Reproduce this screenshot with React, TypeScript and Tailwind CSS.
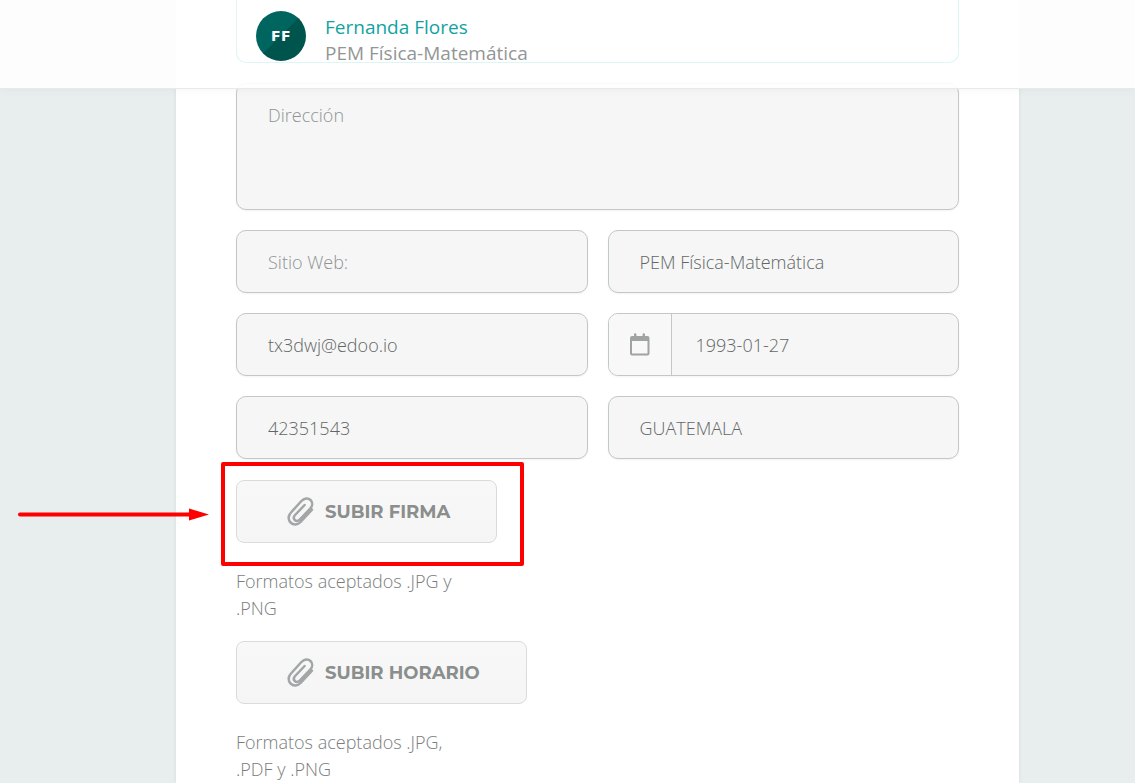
import React from "react";

const fieldBox = "rounded-[10px] border border-[#c1c8c7] bg-[#f6f6f6] shadow-[0_1px_2px_rgba(0,0,0,0.05)]";
const fieldText = "text-lg font-light text-[#626665] placeholder:text-[#8f9493] outline-none";
const noteText = "mt-[25px] w-[240px] text-lg leading-[27px] font-light text-[#797d7c]";

function Field({ label, value, placeholder, type = "text" }: { label: string; value?: string; placeholder?: string; type?: string }) {
  return (
    <input
      type={type}
      aria-label={label}
      defaultValue={value}
      placeholder={placeholder}
      className={`h-[63px] w-full min-w-0 px-[31px] ${fieldBox} ${fieldText}`}
    />
  );
}

function Paperclip() {
  return (
    <svg width="27" height="32" viewBox="0 0 27 32" fill="none" stroke="#a3a6a6" strokeWidth="2.5" strokeLinecap="round" strokeLinejoin="round" aria-hidden="true">
      <path d="M25 13.600 L13.6 26 C10.6 29.100 6.200 29.100 3.600 26.5 C0.9 23.8 1 19.600 4 16.5 L14.4 5 C17.2 2 21 1.600 23.500 4 C26 6.500 25.700 10 23.2 12.6 L13 23.400 C11.2 25.200 9.2 25.400 7.8 24 C6.4 22.600 6.600 20.600 8.1 19 L17.6 9" />
    </svg>
  );
}

function CalendarIcon() {
  return (
    <svg width="22" height="24" viewBox="0 0 22 24" fill="none" aria-hidden="true">
      <path fill="#a0a3a3" fillRule="evenodd" d="M5 1.500a1.200 1.200 0 0 1 2.400 0V3h6.200V1.500a1.200 1.200 0 0 1 2.400 0V3h2.500A2 2 0 0 1 20.500 5v15.500a2 2 0 0 1-2 2h-15.500a2 2 0 0 1-2-2V5a2 2 0 0 1 2-2H5zM3 8v12.500h15.500V8z" />
    </svg>
  );
}

function UploadButton({ children }: { children: React.ReactNode }) {
  return (
    <button
      type="button"
      className="flex h-[63px] items-center gap-[11px] self-start rounded-lg border border-[#d9dcdb] bg-linear-to-b from-[#f8f8f8] to-[#f5f5f5] pr-[46px] pl-[50px] font-['Montserrat','Inter',sans-serif] text-lg font-bold text-[#8a8e8d]"
    >
      <Paperclip />
      {children}
    </button>
  );
}

export default function App() {
  return (
    <div className="h-screen overflow-hidden bg-[#e8eeee] font-['Open_Sans',sans-serif]">
      <header className="absolute inset-x-0 top-0 z-10 h-[89px] border-b border-[#e7eaea] bg-white/90 pr-[116px] pl-[176px] shadow-[0_2px_8px_rgba(0,0,0,0.03)]">
        <div className="px-[60px]">
          <div className="flex h-[63px] items-end gap-[19px] rounded-b-[10px] border border-t-0 border-[#def5f5] pl-[19px]">
            <div className="mb-px flex size-[50px] shrink-0 items-center justify-center rounded-full bg-linear-135 from-[#00655e] from-50% to-[#00544e] to-50% font-['DejaVu_Sans',sans-serif] text-sm font-bold tracking-wide text-white">
              FF
            </div>
            <div className="text-[19px] leading-[26px]">
              <a href="#perfil" className="block text-[#11a3a3]">Fernanda Flores</a>
              <p className="-mb-1 text-[#929695]">PEM Física-Matemática</p>
            </div>
          </div>
        </div>
      </header>

      <main className="h-full pr-[116px] pl-[176px]">
        <form className="relative flex h-full flex-col bg-white px-[60px] pt-[83px] shadow-[0_0_4px_rgba(0,0,0,0.08)]">
          <textarea
            aria-label="Dirección"
            placeholder="Dirección"
            className={`block h-[127px] w-full shrink-0 resize-none px-[31px] pt-[17px] ${fieldBox} ${fieldText}`}
          />
          <div className="mt-5 grid grid-cols-2 gap-5">
            <Field label="Sitio Web" placeholder="Sitio Web:" />
            <Field label="Profesión" value="PEM Física-Matemática" />
            <Field label="Correo electrónico" type="email" value="tx3dwj@edoo.io" />
            <div className={`flex h-[63px] overflow-hidden ${fieldBox}`}>
              <button type="button" aria-label="Elegir fecha" className="flex w-[63px] shrink-0 items-center justify-center border-r border-[#c1c8c7] bg-[#f8f8f8]">
                <CalendarIcon />
              </button>
              <input aria-label="Fecha de nacimiento" defaultValue="1993-01-27" className={`w-full min-w-0 bg-transparent px-6 ${fieldText}`} />
            </div>
            <Field label="Teléfono" type="tel" value="42351543" />
            <Field label="País" value="GUATEMALA" />
          </div>

          <div className="mt-[21px] flex flex-col">
            <UploadButton>SUBIR FIRMA</UploadButton>
            <p className={noteText}>Formatos aceptados .JPG y .PNG</p>
          </div>
          <div className="mt-[19px] flex flex-col">
            <UploadButton>SUBIR HORARIO</UploadButton>
            <p className={noteText}>Formatos aceptados .JPG, .PDF y .PNG</p>
          </div>
        </form>
      </main>

      <div className="pointer-events-none absolute top-[462px] left-[221px] h-[104px] w-[303px] rounded-[2px] border-4 border-[#ff0000]" />
      <svg className="pointer-events-none absolute top-[508px] left-[17px]" width="194" height="14" viewBox="0 0 194 14" aria-hidden="true">
        <path d="M3 6.500H174" stroke="#ff0000" strokeWidth="4" strokeLinecap="round" />
        <path d="M172 0.500L192 6.500L172 12.500Z" fill="#ff0000" />
      </svg>
    </div>
  );
}
